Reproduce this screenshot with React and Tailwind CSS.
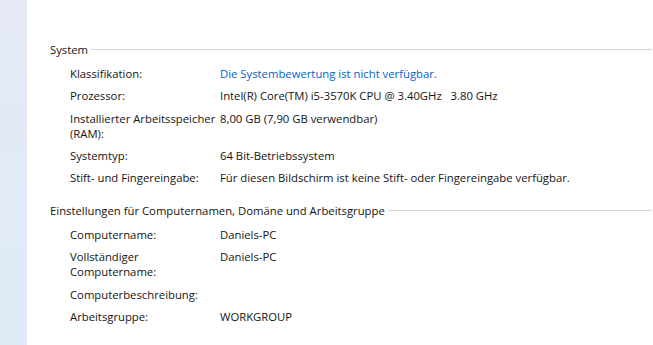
export default function App() {
  const system = [
    { label: "Klassifikation:", value: "Die Systembewertung ist nicht verfügbar.", link: true },
    { label: "Prozessor:", value: "Intel(R) Core(TM) i5-3570K CPU @ 3.40GHz   3.80 GHz" },
    { label: ["Installierter Arbeitsspeicher", "(RAM):"], value: "8,00 GB (7,90 GB verwendbar)" },
    { label: "Systemtyp:", value: "64 Bit-Betriebssystem" },
    { label: "Stift- und Fingereingabe:", value: "Für diesen Bildschirm ist keine Stift- oder Fingereingabe verfügbar." },
  ];
  const computer = [
    { label: "Computername:", value: "Daniels-PC" },
    { label: ["Vollständiger", "Computername:"], value: "Daniels-PC" },
    { label: "Computerbeschreibung:", value: "" },
    { label: "Arbeitsgruppe:", value: "WORKGROUP" },
  ];

  const Row = ({ row }) => (
    <div className="flex">
      <div className="w-[150px] shrink-0 whitespace-nowrap">
        {Array.isArray(row.label)
          ? row.label.map((l) => <div key={l}>{l}</div>)
          : row.label}
      </div>
      <div className={`whitespace-pre ${row.link ? "text-[#0066cc]" : ""}`}>{row.value}</div>
    </div>
  );

  const Section = ({ title, rows }) => (
    <div>
      <div className="flex items-center gap-[3px]">
        <span className="whitespace-nowrap">{title}</span>
        <div className="h-px flex-1 bg-[#d5d5d5]" />
      </div>
      <div className="mt-[9px] flex flex-col gap-[7.3px] pl-[20px]">
        {rows.map((r, i) => (
          <Row key={i} row={r} />
        ))}
      </div>
    </div>
  );

  return (
    <div
      className="flex h-[345px] w-[653px] overflow-hidden bg-white text-[11.3px] leading-[15px] text-[#141414]"
      style={{ fontFamily: '"Open Sans", "Noto Sans", sans-serif' }}
    >
      <div className="w-[27px] shrink-0 bg-gradient-to-b from-[#e4e9f5] to-[#dfeaf7]" />
      <div className="flex-1 pl-[23px] pr-[1px] pt-[42px]">
        <Section title="System" rows={system} />
        <div className="mt-[18px]">
          <Section title="Einstellungen für Computernamen, Domäne und Arbeitsgruppe" rows={computer} />
        </div>
      </div>
    </div>
  );
}
